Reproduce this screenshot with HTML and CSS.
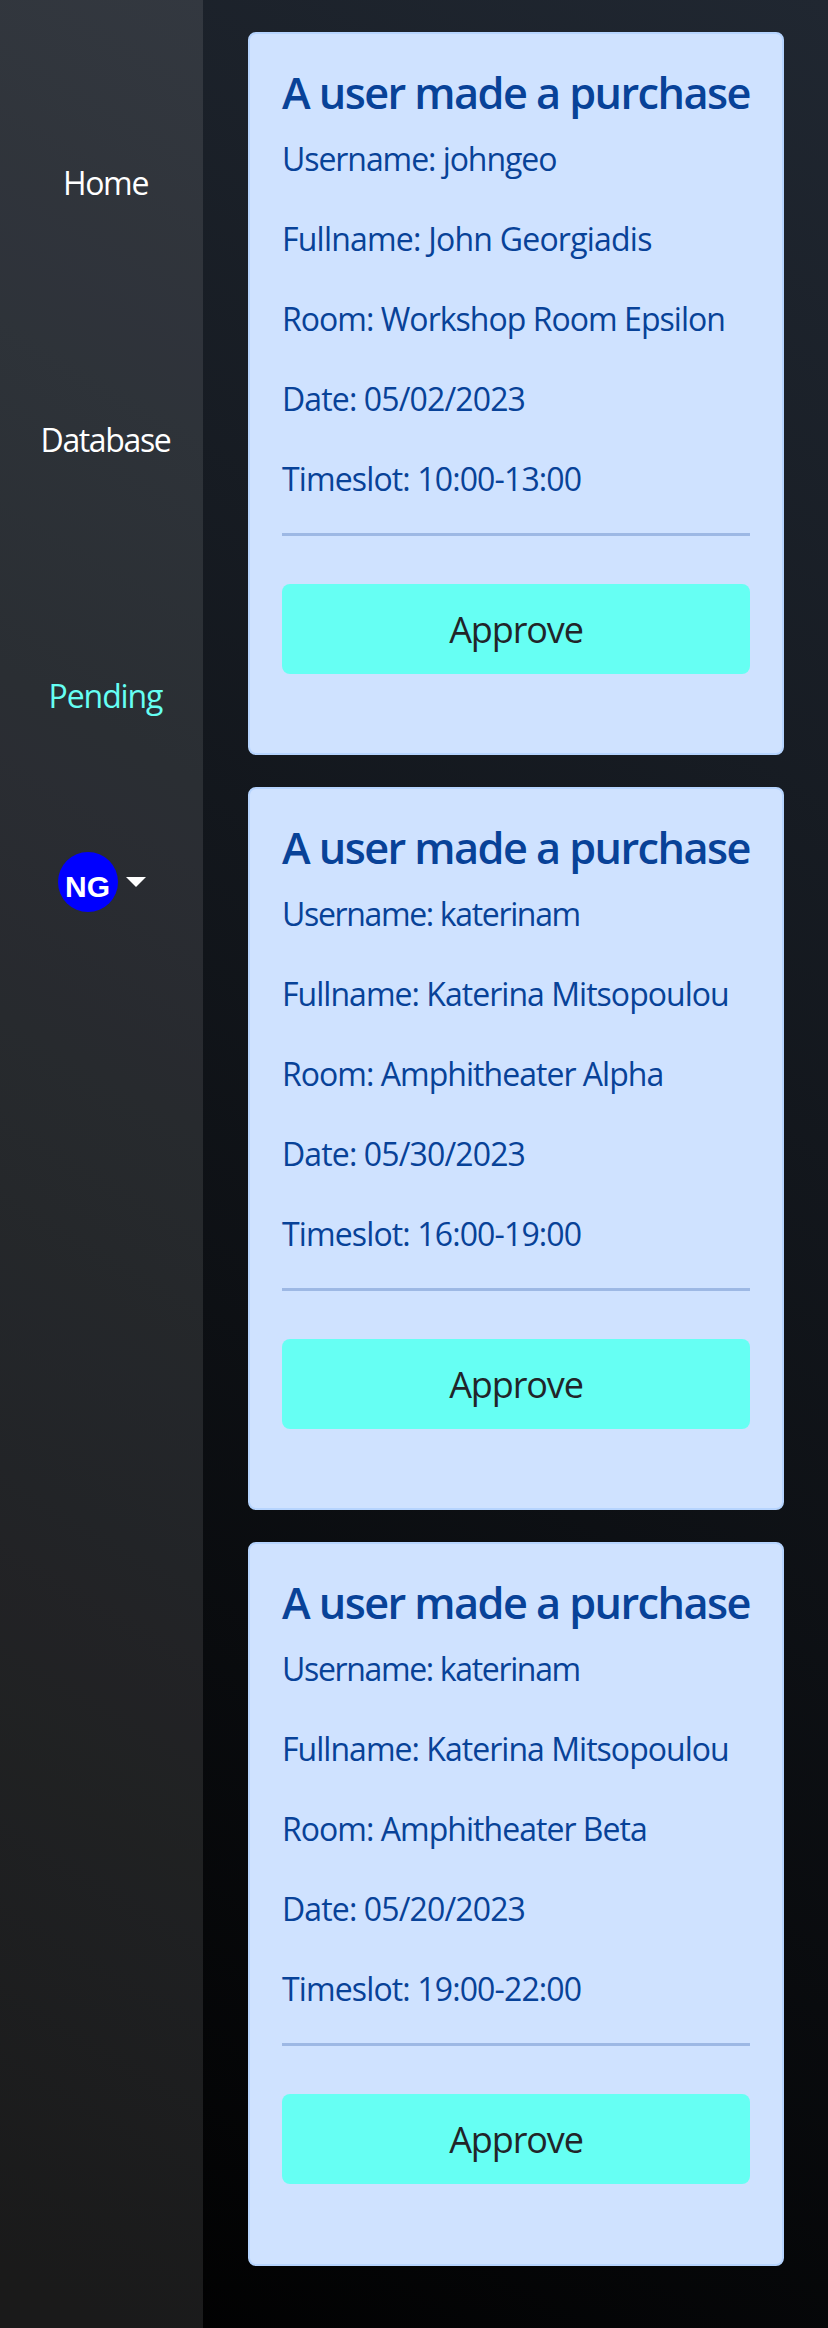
FILE: index.html
```html
<!DOCTYPE html>
<html lang="en">
<head>
<meta charset="utf-8">
<title>Pending purchases</title>
<link rel="stylesheet" href="styles.css">
</head>
<body>
<nav class="sidebar">
  <a class="nav-link home">Home</a>
  <a class="nav-link database">Database</a>
  <a class="nav-link pending">Pending</a>
  <div class="account">
    <span class="avatar">NG</span>
    <svg class="caret" width="20" height="10" viewBox="0 0 20 10"><path d="M0 0H20L10 10Z" fill="#fff"/></svg>
  </div>
</nav>
<main class="list">
  <section class="card">
    <h4 class="title">A user made a purchase</h4>
    <p class="line short-name">Username: johngeo</p>
    <p class="line person">Fullname: John Georgiadis</p>
    <p class="line">Room: Workshop Room Epsilon</p>
    <p class="line numeric">Date: 05/02/2023</p>
    <p class="line numeric">Timeslot: 10:00-13:00</p>
    <hr class="rule">
    <button class="approve">Approve</button>
  </section>
  <section class="card">
    <h4 class="title">A user made a purchase</h4>
    <p class="line username">Username: katerinam</p>
    <p class="line">Fullname: Katerina Mitsopoulou</p>
    <p class="line">Room: Amphitheater Alpha</p>
    <p class="line numeric">Date: 05/30/2023</p>
    <p class="line numeric">Timeslot: 16:00-19:00</p>
    <hr class="rule">
    <button class="approve">Approve</button>
  </section>
  <section class="card">
    <h4 class="title">A user made a purchase</h4>
    <p class="line username">Username: katerinam</p>
    <p class="line">Fullname: Katerina Mitsopoulou</p>
    <p class="line">Room: Amphitheater Beta</p>
    <p class="line numeric">Date: 05/20/2023</p>
    <p class="line numeric">Timeslot: 19:00-22:00</p>
    <hr class="rule">
    <button class="approve">Approve</button>
  </section>
</main>
</body>
</html>
```
FILE: styles.css
```css
* { box-sizing: border-box; }
body {
  margin: 0;
  display: flex;
  height: 2328px;
  font: 32px/48px "Open Sans", "Noto Sans", sans-serif;
  background: linear-gradient(210deg, #202731, #000);
}
.sidebar {
  width: 203px;
  padding: 159px 0 0 8px;
  display: flex;
  flex-direction: column;
  align-items: center;
  background: rgba(248, 249, 250, .105);
}
.nav-link {
  margin-bottom: 208.5px;
  color: #fff;
  letter-spacing: -1.35px;
  white-space: nowrap;
}
.nav-link.pending {
  margin-bottom: 132px;
  color: #66fff3;
  letter-spacing: -1.1px;
}
.account {
  display: flex;
  align-items: center;
  gap: 8px;
  width: 88px;
  margin-left: -8px;
}
.avatar {
  width: 60px;
  height: 60px;
  flex: none;
  padding-top: 5px;
  border-radius: 50%;
  background: #00f;
  color: #fff;
  font: bold 30px/60px "Liberation Sans", sans-serif;
  text-align: center;
}
.caret { flex: none; }
.list {
  padding: 32px 0 0 45px;
  display: flex;
  flex-direction: column;
  gap: 32px;
}
.card {
  width: 536px;
  height: 723.2px;
  padding: 33px 32px 32px;
  border: 2px solid #b6d4fe;
  border-radius: 8px;
  background: #cfe2ff;
  color: #084298;
}
.title {
  margin: 0 0 16px;
  font-size: 43.3px;
  line-height: 52px;
  font-weight: 600;
  letter-spacing: -1.58px;
  white-space: nowrap;
}
.line {
  margin: 0 0 32px;
  letter-spacing: -.97px;
  white-space: nowrap;
}
.line.username { letter-spacing: -1.35px; }
.line.short-name { letter-spacing: -1.07px; }
.line.person { letter-spacing: -.78px; }
.line.numeric { letter-spacing: -.87px; }
.rule {
  height: 3px;
  margin: -2px 0 48px;
  border: 0;
  background: #9db8e4;
}
.approve {
  display: block;
  width: 100%;
  height: 90px;
  padding: 1px 0 0;
  border: 0;
  border-radius: 8px;
  background: #66fff3;
  color: #212529;
  font: 36px/54px "Open Sans", sans-serif;
  letter-spacing: -1.1px;
}
```
